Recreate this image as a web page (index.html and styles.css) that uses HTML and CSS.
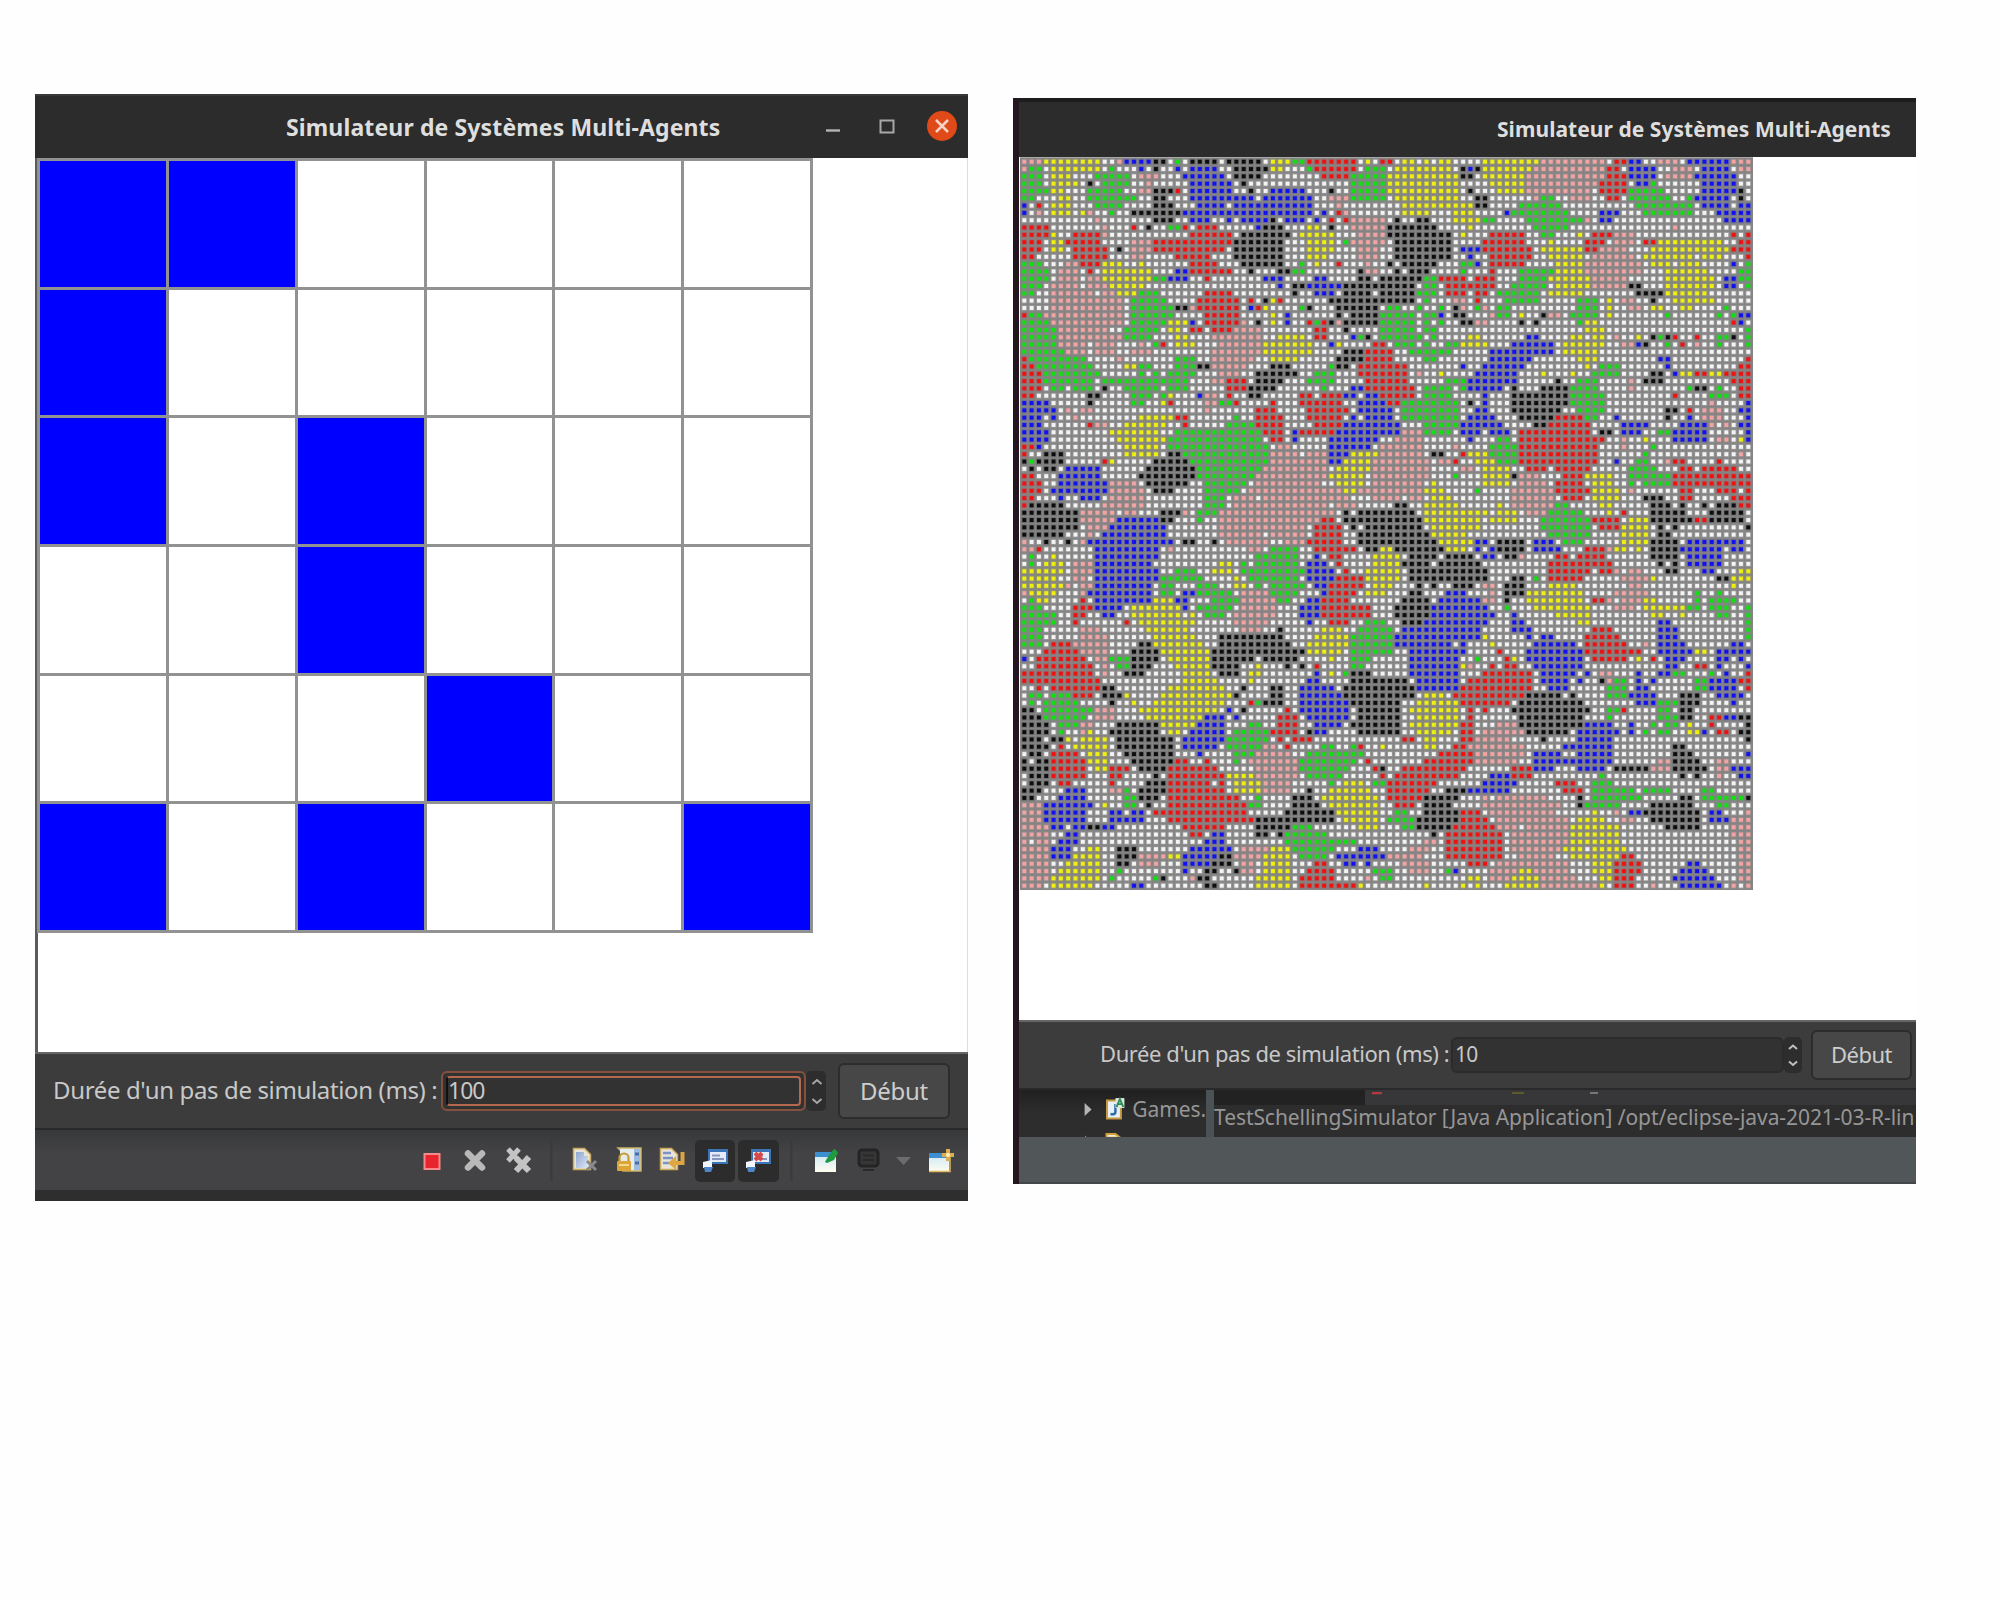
FILE: index.html
```html
<!DOCTYPE html>
<html lang="fr">
<head>
<meta charset="utf-8">
<title>Simulateur de Systèmes Multi-Agents</title>
<link rel="stylesheet" href="styles.css">
</head>
<body>
<main class="desk">
  <section class="window life">
    <header class="titlebar">
      <h1 class="title">Simulateur de Systèmes Multi-Agents</h1>
      <svg class="winbuttons" width="106" height="40" viewBox="0 0 106 40">
        <path d="M11 24.500h14" stroke="#b4b4b4" stroke-width="2.400"/>
        <rect x="65.500" y="14.500" width="13" height="12" fill="none" stroke="#a8a8a8" stroke-width="2"/>
      </svg>
      <svg class="close" width="32" height="32" viewBox="0 0 32 32">
        <circle cx="16" cy="16" r="15" fill="#e04a18"/>
        <path d="M10 10l12 12M22 10l-12 12" stroke="#f6d3c6" stroke-width="2.500"/>
      </svg>
    </header>
    <div class="view"><div class="board" id="board"></div></div>
    <div class="controls">
      <label class="label">Durée d'un pas de simulation (ms) :</label>
      <div class="field focused"><span>100</span></div>
      <svg class="spin" width="20" height="40" viewBox="0 0 20 40"><path d="M6.500 13l4.500-4 4.500 4M6.500 28l4.500 4 4.500-4" fill="none" stroke="#a5a5a5" stroke-width="2"/></svg>
      <button class="start">Début</button>
    </div>
    <svg class="tools" width="933" height="60" viewBox="0 1 933 60">
      <defs>
        <linearGradient id="doc" x1="0" y1="0" x2="1" y2="1"><stop offset="0" stop-color="#8fa6d2"/><stop offset="1" stop-color="#dde6f4"/></linearGradient>
        <linearGradient id="win" x1="0" y1="0" x2="0" y2="1"><stop offset="0" stop-color="#c9e6f5"/><stop offset="1" stop-color="#fffdf0"/></linearGradient>
      </defs>
      <rect x="389.500" y="25" width="15" height="15" fill="#e8242f" stroke="#f58a8a" stroke-width="2"/>
      <path d="M433 24.500l14 14M447 24.500l-14 14" stroke="#b9b9b9" stroke-width="6.500" stroke-linecap="round"/>
      <path d="M473 20l11 12M484 20l-11 12" stroke="#c4c4c4" stroke-width="5"/>
      <path d="M481 29l13 13M494 28l-13 14" stroke="#c4c4c4" stroke-width="6"/>
      <path d="M516.500 10v42M756.500 10v42" stroke="#3a3a3c" stroke-width="2"/>
      <path d="M538.500 19.500h11l6 6v15h-17z" fill="#e8e4d8" stroke="#c9a95a" stroke-width="1.500"/>
      <path d="M541 23h8v4h4v12h-12z" fill="url(#doc)"/>
      <path d="M552 32l9 9M561 32l-9 9" stroke="#8a8a8a" stroke-width="3"/>
      <path d="M583 19h23v23h-18v-18z" fill="#e9eee2" stroke="#c7b069" stroke-width="1.500"/>
      <path d="M585 20h13v21h-13z" fill="#e4ecec"/>
      <path d="M599 20h6v21h-6z" fill="#9dbbe0"/><path d="M600 25h4M600 34h4" stroke="#4a6fa8" stroke-width="3"/>
      <path d="M584.500 33v-4a4.500 4.500 0 0 1 9 0v4" fill="none" stroke="#c99a34" stroke-width="2.200"/>
      <rect x="582" y="32" width="14" height="10" rx="1" fill="#dba637"/><path d="M584 36h10" stroke="#f3d98b" stroke-width="2"/>
      <path d="M625.500 19.500h11l6 6v15h-17z" fill="#e8e4d8" stroke="#c9a95a" stroke-width="1.500"/>
      <path d="M628 24h8M628 29h10M628 34h7" stroke="#7a92c6" stroke-width="2.500"/>
      <path d="M647.500 23v11h-10" fill="none" stroke="#dca542" stroke-width="4"/><path d="M633 34l8-7v14z" fill="#e0a740"/>
      <rect x="660" y="11" width="40" height="42" rx="5" fill="#2c2c2d"/>
      <rect x="703" y="11" width="41" height="42" rx="5" fill="#2c2c2d"/>
      <g id="console">
        <rect x="674" y="21" width="18" height="13" fill="#e4ebf6" stroke="#3c74b8" stroke-width="2"/>
        <path d="M674 21.500h18" stroke="#3c74b8" stroke-width="3"/>
        <path d="M677 26.500h8M677 30h12" stroke="#8795bd" stroke-width="2"/>
        <path d="M668 33l9-2v7l-9 1z" fill="#f2f5fb"/><path d="M669 38h9l-2 5h-6z" fill="#4f86c8"/>
      </g>
      <use href="#console" x="43"/>
      <path d="M720 24l7 7M727 24l-7 7" stroke="#d94848" stroke-width="4"/>
      <rect x="780" y="23" width="21" height="20" fill="url(#win)"/><rect x="780" y="23" width="21" height="5" fill="#3c8fd0"/>
      <path d="M790 33l4-7 5-6 2 1 2 3-4 7-7 3z" fill="#1f9a3e"/>
      <rect x="824" y="21" width="19" height="16" rx="3" fill="#363636" stroke="#242424" stroke-width="3"/><path d="M828 26.500h11M828 31h11M828 41h11" stroke="#292929" stroke-width="2"/>
      <path d="M861 28h15l-7.500 8z" fill="#6c6c6e"/>
      <rect x="894" y="24" width="20" height="19" fill="url(#win)"/><rect x="894" y="24" width="20" height="5" fill="#3c8fd0"/>
      <path d="M894 42.500h21v-15" fill="none" stroke="#dfb95c" stroke-width="1.500"/>
      <path d="M913 20v12M907 26h12" stroke="#d9ae54" stroke-width="4"/><circle cx="913" cy="26" r="2" fill="#fff0bd"/>
    </svg>
    <div class="edge"></div>
  </section>

  <section class="window schelling">
    <header class="titlebar"><h1 class="title">Simulateur de Systèmes Multi-Agents</h1></header>
    <div class="view"><canvas id="population" width="734" height="734"></canvas></div>
    <div class="controls">
      <label class="label">Durée d'un pas de simulation (ms) :</label>
      <div class="field"><span>10</span></div>
      <svg class="spin" width="18" height="36" viewBox="0 0 18 36"><path d="M5 12l4-3.500 4 3.500M5 24.500l4 3.500 4-3.500" fill="none" stroke="#c0c0c0" stroke-width="2"/></svg>
      <button class="start">Début</button>
    </div>
    <div class="ide">
      <div class="tree">
        <svg width="112" height="48" viewBox="-2 1 112 48">
          <path d="M64 14v13l7-6.500z" fill="#b5b5b5"/><path d="M65 48v-1" stroke="#aaa"/>
          <path d="M86.500 11.500h14v18h-14z" fill="#e9f0f6" stroke="#c49a42" stroke-width="2"/>
          <path d="M95 15v8q0 3-5 2" fill="none" stroke="#2f6da8" stroke-width="2.500"/>
          <path d="M95 9h9v10h-9z" fill="#dce9dc"/><path d="M96 18l3.500-8 3.500 8M97 15h5" fill="none" stroke="#2e8b57" stroke-width="1.800"/>
          <path d="M86 45h9l5 4h-14z" fill="#f3ead2" stroke="#cf9f3c" stroke-width="2"/>
        </svg>
        <span class="node">Games.</span>
      </div>
      <div class="sash"></div>
      <div class="console">
        <div class="strip"><svg width="552" height="15" viewBox="0 0 552 15"><path d="M7 1h10" stroke="#b63a44" stroke-width="2.500"/><path d="M147 1h12" stroke="#5e5a2c" stroke-width="2"/><path d="M225 1h8" stroke="#77777a" stroke-width="2"/></svg></div>
        <div class="process">TestSchellingSimulator [Java Application] /opt/eclipse-java-2021-03-R-lin</div>
      </div>
    </div>
    <footer class="status"></footer>
  </section>
</main>
<script src="grids.js"></script>
</body>
</html>
```

FILE: styles.css
```css
* { box-sizing: border-box; }
body { margin: 0; background: #fefefe; font-family: "Noto Sans", "Open Sans", sans-serif; }
.desk { display: flex; align-items: flex-start; gap: 45px; width: 2000px; height: 1600px; padding: 94px 0 0 35px; overflow: hidden; }
.window { display: flex; flex-direction: column; overflow: hidden; flex: none; }
.titlebar { display: flex; background: #2c2c2c; flex: none; }
.title { margin: 0; font-weight: 700; color: #dedede; white-space: nowrap; }
.controls { display: flex; background: #3c3c3c; border-top: 2px solid #666; border-bottom: 2px solid #292929; flex: none; }
.label { color: #c8c8c8; white-space: nowrap; flex: none; }
.field { background: #323232; color: #c8c8c8; border: 2px solid #2b2b2b; border-radius: 6px; flex: none; }
.spin { background: #2d2d2d; border-radius: 5px; flex: none; }
.start { padding: 0 0 2px; font-family: inherit; color: #cdcdcd; background: #474747; border: 2px solid #2c2c2c; border-radius: 6px; flex: none; }

.life { width: 933px; height: 1107px; }
.life .titlebar { height: 64px; border-top: 2px solid #383a39; }
.life .title { padding-left: 251px; width: 780px; font-size: 23px; line-height: 62px; letter-spacing: 0.13px; }
.winbuttons { margin-top: 10px; flex: none; }
.close { margin: 14px 0 0 5px; flex: none; }
.life .view { height: 894px; background: #fff; border-left: 3px solid #5a5c5c; border-right: 1px solid #ddd; }
.board { display: grid; grid-template: repeat(6, 1fr) / repeat(6, 1fr); width: 776px; height: 775px; margin-left: -1px; gap: 3px; padding: 3px; background: #929292; }
.board div { background: #fff; }
.board .alive { background: #00f; }
.life .controls { height: 78px; padding: 9px 0 0 18px; }
.life .label { width: 388px; font-size: 24px; line-height: 53px; letter-spacing: -0.36px; }
.life .field { width: 365px; height: 40px; margin-top: 8px; font-size: 23px; line-height: 36px; letter-spacing: -1px; }
.life .focused { border-color: #84513f; padding: 3px; }
.focused span { display: block; height: 30px; border: 2px solid #b3694e; border-left-color: #101010; border-radius: 4px; line-height: 25px; }
.life .spin { margin-top: 8px; }
.life .start { width: 112px; height: 56px; margin-left: 12px; font-size: 24px; letter-spacing: -0.3px; }
.tools { display: block; flex: none; background: linear-gradient(#37393a, #434345 40%, #434345); }
.edge { height: 11px; background: #2e2e2e; flex: none; }

.schelling { width: 903px; height: 1086px; margin-top: 4px; border-left: 6px solid #23161f; background: #fff; }
.schelling .titlebar { height: 59px; border-top: 4px solid #1d1d1d; }
.schelling .title { padding-left: 478px; font-size: 21px; line-height: 55px; letter-spacing: 0.04px; }
.schelling .view { height: 863px; padding-left: 1px; }
.schelling canvas { display: block; }
.schelling .controls { height: 70px; padding: 8px 0 0 81px; }
.schelling .label { width: 351px; font-size: 22px; line-height: 47px; letter-spacing: -0.42px; }
.schelling .field { width: 333px; height: 36px; margin-top: 7px; padding-left: 2px; font-size: 21px; line-height: 31px; letter-spacing: -0.8px; }
.schelling .spin { margin-top: 7px; }
.schelling .start { width: 101px; height: 50px; margin-left: 9px; font-size: 22px; letter-spacing: -0.5px; }
.ide { display: flex; height: 47px; flex: none; color: #969696; }
.tree { display: flex; width: 187px; background: linear-gradient(#202020, #2d2d2d 50%); overflow: hidden; flex: none; }
.node { margin-left: 2px; font-size: 21px; line-height: 38px; letter-spacing: -0.1px; }
.sash { width: 8px; background: #4b5255; flex: none; }
.console { display: flex; flex-direction: column; flex: 1; min-width: 0; }
.strip { height: 15px; padding-left: 151px; background: linear-gradient(90deg, #222 151px, #37373a 151px); overflow: hidden; }
.process { height: 32px; background: #2d2d2d; font-size: 21px; line-height: 24px; letter-spacing: -0.07px; white-space: nowrap; overflow: hidden; }
.status { height: 47px; background: #515659; border-bottom: 2px solid #434749; flex: none; }
```

FILE: grids.js
```js
const alive = ["110000", "100000", "101000", "001000", "000100", "101001"];
const board = document.getElementById("board");
for (const row of alive) for (const c of row) {
  const cell = document.createElement("div");
  if (c === "1") cell.className = "alive";
  board.appendChild(cell);
}

// One line per row: colour letter followed by a column or a range of columns.
const rows = `p0-2 y3-10 p13 b14-17 k18-19 g21 k23-26 k28-32 y34-36 g37-38 r39-45 y47 r49-50 y52-53 y55 y57-58 y63-70 p71-79 r81-82 b83-84 p87-89 b91-96 p97-99
p0 g1-2 y4-10 g12 b16 k18 b21 b23-26 k29-33 y34-35 g39 r40-45 g47-49 y51-58 k60 b61 k62 y63-69 p70-79 r80-81 b83-86 p89-91 b93-96 p98-99
g0-2 y4-6 g10-14 p16-18 b22-27 k29-32 r41-44 g45-49 y50-59 k60-61 y63-68 p69-79 r80-82 b83-86 p88-91 b92-97
g0-2 y4-7 k9 g11-14 p17 b23-28 k30 g45-49 y50-59 y64-68 p69-78 r79-82 b84-85 g86 b93-97
g0-3 y4-5 g9-13 p16-17 k18-20 r21 b23-28 k31 b34-38 k42 g45-49 y50-59 k61 y65-68 p69-77 r79-82 g83-87 b93-97 k98
g0-1 y5-6 g9-15 k18-19 b23-31 b33-39 p42-44 g45-49 y51-59 k62-63 p70 g71-72 p75-77 r80-81 g83-88 g91 b92-96 k98
b0 r2 y4-6 g10-13 k18-20 b24-27 b29-39 p43 y52-61 k62-63 g68-73 g84-91 b93-96 b98-99
b0 p2 y4-6 y8 p9 g12 k15-21 b22-28 b29-39 b41 r43 p44 y52-55 y59-61 b66 g67-74 b79-81 g85-91 b95-99
p10 k18-20 b23-25 b28 b30-33 k34 b36-38 b40 r42 r44 p45-49 k51 k54-55 y59-62 g63-64 g69-76 p77 b79-80 b96-99
r0-3 p11 r15 k17 g20-21 r22 r24-26 b32 k33-35 y39-40 k42 p45-49 k50-56 y61 g70-74 p89
r0-3 y4 r7-10 p11 r23-28 k30-36 y38-42 p46-49 k50-58 y60 r64-68 g71-72 y76 r78-80 p81-83 r97 r99
r0-2 y4-5 r6-10 p15-17 r18-28 k29-35 y39-42 g44 p45-49 k51-58 r63-68 y72 r77-79 p81-83 r85-86 y87-95 r98-99
r0-2 y4-5 r7-11 k13 p15-17 r18-27 k29-35 y39-42 p46-48 k51-58 b60-62 r63-69 y71-76 r77-78 p79-82 y86-96 r97-99
r0-1 r7-11 p15-16 r21-25 k29-35 y39-41 p46-48 k51-58 b61 r64-69 y72-76 p78-83 y85-91 y93-95 r99
g0-2 p6-7 r8-10 y11-13 y16 r23-26 k30-35 g38 y40 r43 p47 k50 k52-56 g60-61 b62 r64-68 y73-76 p77-84 y86-88 y90-92 b97 g99
g0-3 p5-7 r9 y11-17 b21-22 r23-28 k31 k35-36 g37-38 k46 p47-48 k51 k53-55 g60 r64 g68-72 y73-76 p77-84 y88-93 g98-99
g0-3 p5-7 p9-10 y11-17 g18-19 b20-22 r25 b33-35 b40-41 k46-47 k49-54 g55-56 r57-60 r62-64 g68-71 y72-77 p78-82 y88-94 b96-97 g98-99
g0-2 p4-7 p9-11 y12-16 b35 k37-38 b39-43 k44-53 g55-56 r58-64 g67-71 y73-77 p78-82 k83-84 y88-94 b96-97 g99
g0-1 p4-9 p11-12 y13-15 g16-18 r25-28 k37 b40-42 k44-47 k49-53 g54-56 r58-60 r62-63 g65-70 y72-76 k84-87 y88-93
p4-13 g15-19 r24-29 r31 k33 y34 r35 k42-53 g55 p59-60 r62 g66-70 g76-78 y80 p82-83 k86 y89-94
p4-13 g15-20 k21-22 p23 r24-29 b31 r32 y33 g38 k39 k43-48 g50-51 g54 g57 k59 p60 g62 p63 g65-66 g76-78 y80 p83-84 y86-87 y90-91 g96
r0 g1-2 p3-13 g15-20 r25-29 y34 b36 k43 k45-48 g49-53 g55-56 b57 k59-60 p64 g65-66 y68 k71 p72-73 g75-78 y80 g88 g95 g97 b98-99
g0-3 p4-13 g15-19 y20-22 b23 r25-29 p30 k32 y34 b36 r39 g40 r41 k42 p43 k44-48 g49-53 g55 g57 k60-61 p62-63 k68 k70 g76 y77-78 r97 b98
g0-4 p5-11 g14-18 y20-21 r23-24 r26-28 p29-32 r40-41 k44 g49-53 g55-56 y77-79 g99
g0-4 p5-13 g14-17 y21-22 p26-32 y35-38 r40-41 b45 g46 k47 g49-53 g54 g56 y61-62 b69-70 y75-76 y78-79 p81 y84 k86 g87 k88 r89 r92 g95-96 k97 g99
g0-4 p5-8 p10-12 p16 g18 r19 y21-23 p27-32 y33-39 b42 y43 r48-49 g51-53 g55 g58-59 y60-63 b67-72 y74-79 p82-83 b84 k85 g88 r90 p92 g95 g99
g0-5 p6-8 p10-12 p15-17 p26-32 y33-39 k44-46 r47-50 g53-58 b64-72 y74-78
r0 g1-8 p13 g21-23 p26-31 y34-37 k43-46 r47-50 g55-56 b64-69 y76-78 b87-88 r99
r0-1 g2-9 y14-15 g16-17 g21-23 k24-25 p26-30 k34-36 g42 k43-44 r46-52 b60 b63-68 y77 g79-81 b88 r98-99
r0-2 g3-10 g16 g18 g20-23 p27-29 k32-37 g40-42 r46-52 p54 y57 b62-67 y71 y75 g78-81 k86-87 b89 y90-91 r92-93 y94-95 r96-99
r0-2 g3-9 g11-22 p26-27 r28-30 k32-35 g39-42 r47-52 g58-60 b61-67 k73 g76-78 p83 k85-87 r97-99
r0-2 g4-5 g7-9 k11 g14-18 g20-22 r28-30 k31-34 g41 b45-46 r47-53 g55-58 g60 b61-65 k67 k71-74 g75-78 p83 g91 k92-93 g95 r98-99
r0-1 k9-10 g15-17 g19 y20 b24 p25-26 r28 k31-32 r38-39 r41-43 b44-45 b47-48 r49-53 g55-58 b63 k67-74 g75-79 r89 g94-96 r98-99
b0-3 k9 g15-16 y19 r20 p25-26 g27-28 r29 r34 r38-43 b46-49 r50-51 g52-59 k61 b63 k67-74 g75-79 p94 b99
b0-4 p6 p8-9 p25 r32-34 r39-44 b46-50 g52-59 b62-63 k67-73 g76-79 k88-89 r91 p93-95 b98-99
b0-2 b4 p7 y16-20 r21-22 g29 r32-35 r39-43 b45 b47-50 g52-59 b61-64 k68-72 r73-76 g77-78 b81 k88 b91 p93-95 b99
b0-2 r9 p10-11 y14-19 r22 g28-31 r32-35 r40-43 b44-51 g55-59 b60-65 k70-71 r72-77 b82-85 b90-93 p94 p96 b98-99
b0-3 y12-18 g21-32 r33-35 b37 r38-42 b43-51 p52-54 g55-58 b60-62 b64-66 r68-77 k79-80 b82-84 g87-88 b89-93 b99
b0-3 y13-19 g20-32 r34-35 b37 b42-48 p51-54 b61 g65-66 r68-79 p82 y85 b89-93 p95-96 y98 b99
r0-1 b2 y14-18 g20-33 p35-36 b42-47 p49-54 p59 g64-67 r68-78 p82 g86
r0 k3-5 y14-18 k20-21 g22-33 p34-37 p39-41 b42-44 y45-48 p49-54 k56-57 r60 y61-63 g64-67 r68-78 g85 p98
k0 g1 k2-5 r11 y12 k18-22 g23-33 p34-41 b42-43 y44-47 p48-55 p57-58 r59 y62-64 g65-67 r68-78 b81 g84-85 p88 r89-90 r95
k1 k3-4 b6-10 k17-23 g24-32 p33-41 y43-47 p48-55 p60-61 y63-66 r69-71 r73-77 g83-86 r90-91 r93-97
r0-1 b5-10 k16-23 g24-31 p32-41 y42-46 p48-55 g59 y63-66 k67 p68-70 r74-76 y77-80 g83-88 r89-99
r0-2 b5-11 p12-15 k17-22 g25-30 p32-40 y43-46 p48-54 y56 y63-66 p68-71 r73-76 y78-80 g83 g85-88 r89-99
r0-2 b4-11 p12-16 k18-20 g25-29 p31-43 y44-45 p46-54 y55-57 g62 p67-72 r73-77 y78-81 p83 r90-91 r95-97 r99
r0-1 b5 b8-10 p12-16 g25-27 p29-31 p33-44 p48-51 p53-54 y56-58 p67-72 r74-76 y78-81 k85-87 r90-91 r97-99
r0 k1-5 p11-16 g25-27 p29-41 p43-45 k51-52 y55-59 y65 p67-72 g73-74 y79-80 k86-88 k90 k93 k95-97 r98-99
k0-7 p8-12 p14-15 k19-21 p22 g24-26 p27-42 k44 k46-53 y55-63 y65-67 p69-71 g72-76 y80 r82 k86-90 k94-98
k0-7 p8-12 b13-18 k19-20 g24 p27-40 r41-42 k44-54 y55-62 y64-67 g71-77 r78-81 y83-85 k86-91 r92-93 k94-98
k0-7 p9-11 b12-19 p27-38 r40-43 k45 k47-54 y56-62 g71-77 r79-81 y82-85 k87 k89 k99
k0-5 p9 b11-19 p27-32 p34-38 r40-43 k46-55 y56-60 g72-77 y82-85 k87-88
p0 k3 k6 p8 b9-20 k22-23 k26 p28-33 p36-38 r39-43 k46-56 y57-61 b62-63 k65-68 b70-72 g74-76 y82-85 k86-89 b91-98
p0-1 r2 b10-18 p20 p31-32 g34-37 r40-45 k47-48 y49-50 k51-57 y58-60 b62 b64 k65-68 b70-73 r77-79 p80 y81-82 y84 k86-89 b90-95 b97-98
g1 y4 b10-18 g32-37 b40 r42-43 y48-51 k53-56 k58-61 b63-64 k66-67 p68 r73-74 r76-79 k86-89 b91-95
g1 y3-5 p7-9 b10-17 y27-28 g30 g32-37 b39-41 r43 y48-51 k52-55 k57-62 r72-80 k87 k89 b91-95
y0-5 p7-9 b10-18 g21-23 y26-28 g30-38 b39-42 r44 y47-51 k53-63 r72-77 r79-80 p81 p83-84 k88-89 b93-94 y98-99
y0-4 p7-8 b10-18 g19-24 y29 g31-37 b39-42 r43-46 y47-51 k53-63 k67-68 g70 r72-76 p82-85 y86 k95-96 y97-99
y0-5 p6 p8-9 b10-17 g19-20 g24-26 y29-30 g32 g34-38 b40-41 r42-46 y48-50 k54 k56 k59-61 p63-64 k66-68 y72-75 p83-84 y97
p0 y1-4 p8 b9-17 g19-20 b22-23 g24-28 p30-33 g34-37 b41 r42-45 y47-49 k53-54 b58-60 p64 k66-68 y69-76 p81-85 g92 g95
g1 y2-3 r8 b10-17 y18-20 b21-22 g26-29 p30-34 g35-36 b39-40 r41-44 k52-55 b57-62 p63-64 k66 y69-76 r78-79 p80 p82-84 y85-86 g92 g94-97
g0-2 r7-9 b10-13 y15-21 b22 g24-28 p30-34 b38-40 r41-47 k51-55 b56-63 g66 y70-77 p81-83 y85-90 g91-92 g94-96 g99
g0-4 r7-8 b11-12 y15-21 y23 g25-27 p29-34 b38-40 r41-47 k51-55 b56-64 b67 y73-77 y86-87 y90 g95-96 g99
g0-4 r7 r14 y16-23 p29-33 b39 r42-44 g47-49 k52-54 b55-63 b67-68 y76-77 b87-88 g99
g0-2 p8-10 y17-22 p30-32 k35 y41-43 g46-50 b52-62 b67-69 r78-80 b87-89 g99
g0-2 p8-11 y18-23 k27-35 y40-44 g45-50 b51-62 y63 b69 b71-72 r77-81 b87-89 g99
g0-2 r4-6 p7-11 k16-17 y18-24 k27-36 y39-44 g45-50 b51-58 b60 y64 b70-75 r77-82 p85 b87-90 b97-98
r3-7 p8-11 k15-18 y19-25 k26-38 y39-43 g45-50 b53-60 r65 b69-76 r77-84 b87-91 y92-93 b95-99
b0 r2-8 p10-11 g12-14 k15-18 y20-25 k26-31 k33-37 y42 g45-47 b53-59 g62 r66 y67 b69-76 r78-82 y84 r86 b88-90 b95-96 b98
r2-9 p11 g13-14 k15-17 y21-25 k26-29 y32 k36 k38 r40 g45-46 b53-59 y60 p61 r64 r66-67 b70-76 b88-89 r92-93 b95 b99
r0-9 p11 k14-16 y22-25 k27-29 y31-32 b40 y42 g44 k45-47 b53-59 r63-69 b71-75 b77 p79-80 b84 b87-88 g89-90 g94 b96 r99
r0-10 y22-26 y31 b39-40 k45-52 b54-59 r61-69 b71-74 b76 k79 p80 g81-82 b84 b86 g92-93 b94-97 r98-99
r2 r4-10 k11-12 y20-27 k30 k34-35 b38-42 k44-53 b54-59 r60-69 b72-74 g80-82 b84-85 g92-93 b94-97 r99
g1-2 g4-6 r7-9 k11-13 y14 y19-28 k29 k34-35 b38-43 k44-53 y55-57 r59-68 k69-73 k75 g80-82 b83-86 k90-92 b95-98
g1 g3-7 k12 y15 y18-27 r31 g32 k33-35 b38-44 k45-51 y54-59 r60-66 k68-76 b84-86 g87-89 k90-92 b97
k0-1 g3-9 p10-12 y16-26 b28 k30 r36 b38-44 k46-51 y53-59 r61 r63 k67-77 g80-81 r82 g87-88 k90-91
k0-2 g3-8 p10-12 y17-24 b25-27 b29 r35-37 b39-44 k46-51 y54-59 r61 k68-76 g80 g87-89 k90-91 r94-95 b96-97 k98-99
k0-3 g5-7 p8-9 k13-18 y19-23 b24-27 g31-32 r35-37 b40-43 k45-51 y53-59 r60-61 p65-67 k68-76 b77-80 b83 g86 g88-89 y91 r94 k99
k0-3 g5 p8 y9 k12-18 y20-21 b23-27 g29-33 r34-37 k39 b40-41 k46-51 y54-58 r60-61 p63-68 k69-74 b76-81 b83 g85 g87-88 y91-92 b93 r95-96 k98-99
k0-2 k4-5 y6 y8-11 k13-20 b22-27 g28-33 r35 r37-39 r52-53 y55-56 r60-61 p62-66 k71 b76-80 k99
k0-3 r5 y7-11 k13-20 b22-26 g28-32 p33-34 r36 g41-42 g45 r46 y49 y55-56 r59-60 p61-68 b74-80 k89-90
k1-2 r4-7 y9-11 k14-20 b24 g29-31 p32-36 g39-46 r57-61 p62-68 b70-73 b76-80 k89-91 b99
k0 k2-3 r4-8 y9-11 k15-20 r21-22 r25 g29 p31-37 g38-45 r47 r55-61 p62-67 b70-80 p87-88 k89-92 p95-96
k0-3 r4-8 y10-11 r12-14 k16-19 r20-26 p32-37 g38-44 r48 k49 r52-60 r67-69 b70-72 b76-79 k81-85 p86-88 k89-93 p95-96 b97-99
k1-3 r4-8 r12-13 k18 r20-27 y28-31 p32-37 g39-43 r49 r51-59 b64-66 r67-69 g79 k90 k92 p95 b98-99
k1-3 r5-6 r12 k17-19 r20-25 r27 y29-32 p33-36 g42 y44-46 g48-49 r50-56 b63-67 r73-75 g78-80
k0-2 b6-8 p12-13 g14 k16-19 r20-27 y29-32 p33-36 k39 y42-47 r50-55 k58-60 b61-66 r74-76 g78-83 g85-88 g93-94
k0-1 b5-8 g14-15 k16-18 r20-29 g32 k37-39 y41-48 r50-54 k55-59 p63 p65-71 k76 g78-84 k90-91 g93-98 k99
p0-2 b3-9 y11 g14-15 k17 r20-30 g31-32 k37-40 y42-48 r51-53 k55-58 p63-73 k76 g77-81 k86-91 g95-96
p0-2 b3-8 b12-13 b15-16 r18-30 k36-42 y43-48 g51-52 k55-59 r60-62 p64-72 y78 p81 b83-84 k85-92 b94-95 p99
p0-2 b3-8 b12-16 r20-31 k32-42 y44-48 g50-53 k54-59 r60-63 p65-74 y76-79 p82-83 k86-92 b94-96 p97-99
p0-3 b4-5 b7-8 k9-10 b11-12 r22-27 k32-36 g37-39 y46-48 g52-53 k54-58 r59-64 p65-67 p69-74 y75-81 k88-92 p97-99
p0-3 b6-7 r23-24 b26-27 k32-33 k35 g36-41 k56 r58-65 p67-74 y75-81 p97-99
p0 p2-3 b5-7 b25-27 g36-45 p55-56 r58-65 p67-74 y75-81 p98-99
p0-3 b4-6 y9-10 k13-15 b23-28 p30-33 y34-36 g37-42 b46-48 p53-55 r58-65 p67-73 y74-76 y78-82 p98-99
p0-3 b4-6 y7-10 k13-15 p16-19 y20-21 b22-26 k27-28 p29-32 y33-36 g38-41 b43-49 p50-54 r58-65 p68-72 y75-81 r82-83 p98-99
p0-3 y6-10 k13-14 p16-18 b22-25 k26-28 p30-31 y33-36 r40-41 b44-45 b47 p52-55 r61-63 p65-74 y78-80 r81-84 b91-92 p98-99
p0-3 y5-10 g13 b22 k25-26 k29 p30-31 y33-36 r39-42 g48-50 p53-55 g58 b59 p64-67 y68-69 p70-74 y78-80 r81-84 b90-93 p98-99
p0-3 y4-10 g12 g18 k19 p23 k24-25 y32-36 r38-42 p47 g49-50 y61-62 p64-66 y67-70 p71-75 y79-80 r81-83 b89-94 p98-99
p0-2 y4-9 b15-16 k25-26 y32-36 r38-45 y46 y55 y60 y62 y66-70 p71-78 y79 r81-83 p86 b90-95 p97 p99`.split("\n");

const colors = { w: "#f4f4f4", k: "#0c0c0c", b: "#1010f0", g: "#10e010", r: "#f01010", y: "#f0f010", p: "#f2a4a4" };
const ctx = document.getElementById("population").getContext("2d");
const pitch = 7.313, left = 0.65, top0 = 1.05;
ctx.fillStyle = "#848484";
ctx.fillRect(0, 0.3, 733, 732.7);
rows.forEach((line, r) => {
  const cells = new Array(100).fill("w");
  for (const [, c, a, b] of line.matchAll(/([a-z])(\d+)(?:-(\d+))?/g)) cells.fill(c, +a, +(b || a) + 1);
  cells.forEach((c, i) => {
    const x = left + (i + 0.5) * pitch, y = top0 + (r + 0.5) * pitch;
    ctx.fillStyle = colors[c];
    ctx.globalAlpha = 0.18;
    ctx.fillRect(x - 2.9, y - 2.9, 5.8, 5.8);
    ctx.globalAlpha = 1;
    ctx.fillRect(x - 1.95, y - 1.95, 3.9, 3.9);
  });
});
```
